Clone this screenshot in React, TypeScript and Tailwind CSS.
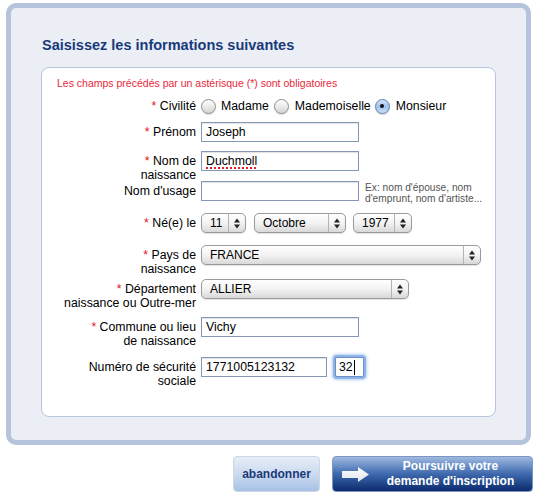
import React from "react";

const Star = () => <span className="text-[#e3101e]">* </span>;

const Label = ({ children }: { children: React.ReactNode }) => (
  <div className="w-[154px] shrink-0 pt-[3px] text-right leading-[14px] text-[12.3px] text-black">{children}</div>
);

const TextInput = ({ value, className, underline }: { value: string; className: string; underline?: boolean }) => (
  <div
    className={
      "flex h-[20px] items-center border border-[#8598b6] bg-white pl-[4px] text-[12.3px] text-black shadow-[inset_0_1px_1px_rgba(0,0,0,0.12)] " +
      className
    }
  >
    {underline ? (
      <span className="underline decoration-dotted decoration-[#e0202a] decoration-2 underline-offset-[3px]">{value}</span>
    ) : (
      value
    )}
  </div>
);

const Arrows = () => (
  <svg width="6" height="11" viewBox="0 0 6 11">
    <polygon points="0,4.5 3,0.5 6,4.5" fill="#222" />
    <polygon points="0,6.5 3,10.5 6,6.5" fill="#222" />
  </svg>
);

const Select = ({ value, className }: { value: string; className: string }) => (
  <div
    className={
      "flex h-[20px] items-center rounded-[5px] border border-[#9a9a9a] bg-gradient-to-b from-white via-[#f3f3f3] to-[#d9d9d9] text-[12px] text-black shadow-[0_1px_1px_rgba(0,0,0,0.12)] " +
      className
    }
  >
    <div className="flex-1 pl-[8px]">{value}</div>
    <div className="flex h-full w-[17px] items-center justify-center border-l border-[#b3b3b3]">
      <Arrows />
    </div>
  </div>
);

const Radio = ({ checked }: { checked?: boolean }) =>
  checked ? (
    <div className="flex h-[15px] w-[15px] items-center justify-center rounded-full border border-[#5b7fae] bg-gradient-to-b from-[#d6e6fa] via-[#9fc2ee] to-[#c9def8] shadow-[0_1px_1px_rgba(0,0,0,0.2)]">
      <div className="h-[4px] w-[4px] rounded-full bg-[#111]" />
    </div>
  ) : (
    <div className="h-[15px] w-[15px] rounded-full border border-[#8f8f8f] bg-gradient-to-b from-[#fdfdfd] via-[#ebebeb] to-[#d4d4d4] shadow-[0_1px_1px_rgba(0,0,0,0.15)]" />
  );

export default function App() {
  return (
    <div className="h-[504px] w-[548px] bg-white pl-[6px] pt-[3px] font-['Liberation_Sans',Arial,sans-serif]">
      <div className="h-[442px] w-[525px] rounded-[10px] border-[5px] border-[#b5c4dc] bg-[#ebeef5] pt-[28px]">
        <h1 className="ml-[31px] text-[14.5px] font-bold leading-[18px] text-[#173a7b]">
          Saisissez les informations suivantes
        </h1>
        <div className="ml-[30px] mt-[13px] h-[350px] w-[455px] rounded-[8px] border border-[#b7c6dc] bg-white">
          <div className="pl-[15px] pt-[8px] text-[10.5px] leading-[14px] text-[#e8283a]">
            Les champs précédés par un astérisque (*) sont obligatoires
          </div>
          <div className="mt-[6px] flex flex-col">
            <div className="flex h-[26px] items-start gap-[5px]">
              <Label>
                <Star />Civilité
              </Label>
              <div className="flex h-[20px] items-center text-[12.3px] text-black">
                <Radio />
                <span className="ml-[5px] mr-[5px]">Madame</span>
                <Radio />
                <span className="ml-[6px] mr-[4px]">Mademoiselle</span>
                <Radio checked />
                <span className="ml-[6px]">Monsieur</span>
              </div>
            </div>
            <div className="flex h-[29px] items-start gap-[5px]">
              <Label>
                <Star />Prénom
              </Label>
              <TextInput value="Joseph" className="w-[158px]" />
            </div>
            <div className="flex h-[30px] items-start gap-[5px]">
              <Label>
                <Star />Nom de
                <br />
                naissance
              </Label>
              <TextInput value="Duchmoll" className="w-[158px]" underline />
            </div>
            <div className="flex h-[32px] items-start gap-[5px]">
              <Label>Nom d'usage</Label>
              <TextInput value="" className="w-[158px]" />
              <div className="ml-[1px] pt-[1px] text-[10.2px] leading-[11px] text-[#555]">
                Ex: nom d'épouse, nom
                <br />
                d'emprunt, nom d'artiste...
              </div>
            </div>
            <div className="flex h-[32px] items-start gap-[5px]">
              <Label>
                <Star />Né(e) le
              </Label>
              <div className="flex items-center">
                <Select value="11" className="w-[45px]" />
                <Select value="Octobre" className="ml-[8px] w-[92px]" />
                <Select value="1977" className="ml-[7px] w-[59px]" />
              </div>
            </div>
            <div className="flex h-[34px] items-start gap-[5px]">
              <Label>
                <Star />Pays de
                <br />
                naissance
              </Label>
              <Select value="FRANCE" className="w-[280px]" />
            </div>
            <div className="flex h-[38px] items-start gap-[5px]">
              <Label>
                <Star />Département
                <br />
                naissance ou Outre-mer
              </Label>
              <Select value="ALLIER" className="w-[208px]" />
            </div>
            <div className="flex h-[40px] items-start gap-[5px]">
              <Label>
                <Star />Commune ou lieu
                <br />
                de naissance
              </Label>
              <TextInput value="Vichy" className="w-[158px]" />
            </div>
            <div className="flex h-[40px] items-start gap-[5px]">
              <Label>
                Numéro de sécurité
                <br />
                sociale
              </Label>
              <TextInput value="1771005123132" className="w-[126px]" />
              <div className="ml-[3px] flex h-[20px] w-[29px] items-center rounded-[2px] border border-[#6f8fc0] bg-white pl-[3px] text-[12.3px] text-black shadow-[0_0_0_2px_#8db4ea,0_0_3px_3px_rgba(110,160,225,0.5)]">
                32<span className="ml-[1px] inline-block h-[15px] w-px bg-black" />
              </div>
            </div>
          </div>
        </div>
      </div>
      <div className="mt-[11px] flex justify-end gap-[12px] pr-[15px]">
        <div className="flex h-[36px] w-[87px] items-center justify-center rounded-[4px] border border-[#cdd7e5] bg-gradient-to-b from-[#e6eef8] via-[#cbdaef] to-[#a7c1e6] text-[12px] font-bold text-[#1b3a78]">
          abandonner
        </div>
        <div className="flex h-[36px] w-[201px] items-center rounded-[4px] border border-[#7d97c2] bg-gradient-to-b from-[#9fb9e0] via-[#3e69ae] to-[#0c2b6e] pl-[9px]">
          <svg width="27" height="15" viewBox="0 0 27 15">
            <defs>
              <linearGradient id="ag" x1="0" y1="0" x2="0" y2="1">
                <stop offset="0" stopColor="#ffffff" />
                <stop offset="1" stopColor="#dfe3ea" />
              </linearGradient>
            </defs>
            <polygon points="0,4 16,4 16,0 27,7.5 16,15 16,11 0,11" fill="url(#ag)" />
          </svg>
          <div className="flex-1 text-center text-[12px] font-bold leading-[15px] text-white">
            Poursuivre votre
            <br />
            demande d'inscription
          </div>
        </div>
      </div>
    </div>
  );
}
